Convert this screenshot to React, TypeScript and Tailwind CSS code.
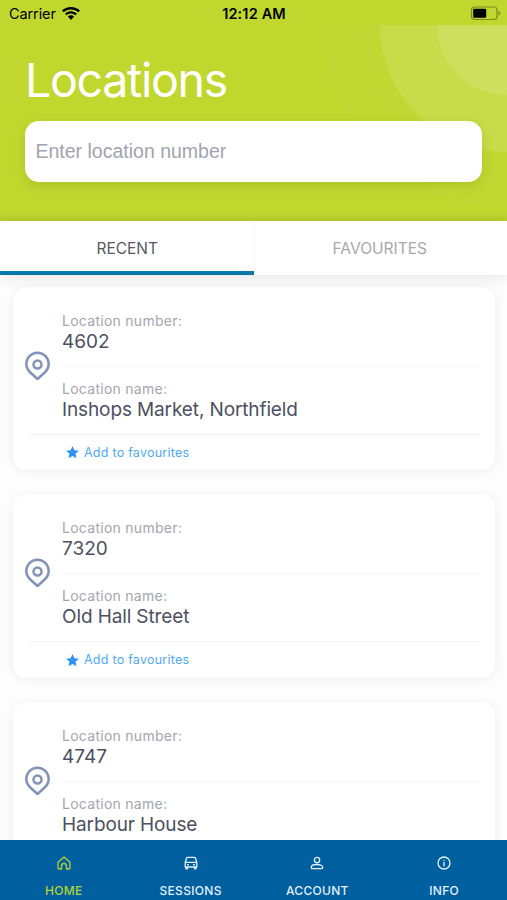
import React from "react";

type Location = {
  number: string;
  name: string;
};

type TabItem = {
  title: string;
  icon: React.ReactNode;
  active?: boolean;
};

const locations: Location[] = [
  { number: "4602", name: "Inshops Market, Northfield" },
  { number: "7320", name: "Old Hall Street" },
  { number: "4747", name: "Harbour House" },
];

const iconProps = {
  viewBox: "0 0 16 16",
  className: "size-4",
  fill: "none",
  stroke: "currentColor",
  strokeWidth: 1.3,
  strokeLinecap: "round" as const,
  strokeLinejoin: "round" as const,
};

const tabItems: TabItem[] = [
  {
    title: "HOME",
    active: true,
    icon: (
      <svg {...iconProps}>
        <path d="M2 7.2 8 2l6 5.2V13a1 1 0 0 1-1 1h-2.500V11a2.500 2.500 0 0 0-5 0v3H3a1 1 0 0 1-1-1Z" />
      </svg>
    ),
  },
  {
    title: "SESSIONS",
    icon: (
      <svg {...iconProps}>
        <path d="M2.200 7.500 3.500 3.300A1.500 1.500 0 0 1 5 2.300h6a1.500 1.500 0 0 1 1.500 1l1.300 4.200V12H2.200ZM2.200 7.300h11.600M3 12v1.800h1.500V12M11.500 12v1.800H13V12" />
        <path d="M4.700 9.700h.6M10.700 9.700h.6" strokeWidth={1.6} />
      </svg>
    ),
  },
  {
    title: "ACCOUNT",
    icon: (
      <svg {...iconProps}>
        <circle cx="8" cy="5" r="2.700" />
        <path d="M2.200 12.300C2.200 10.500 5 9.500 8 9.500s5.800 1 5.800 2.800c0 .8-.4 1.300-1.200 1.300h-9.200c-.8 0-1.200-.5-1.200-1.300Z" />
      </svg>
    ),
  },
  {
    title: "INFO",
    icon: (
      <svg {...iconProps}>
        <circle cx="8" cy="8" r="6" />
        <path d="M8 7.300v3.600M8 5.100v.1" />
      </svg>
    ),
  },
];

const StatusBar = () => (
  <div className="relative flex h-[25px] items-center justify-between pl-[9px] pr-[6px] pt-[2px] text-black">
    <div className="flex items-center gap-[6px]">
      <span className="text-[14.5px] tracking-[-0.1px]">Carrier</span>
      <svg viewBox="0 0 18 13" className="h-[13px] w-[18px]" fill="currentColor">
        <path d="M9 0c3.500 0 6.600 1.300 9 3.600l-1.600 1.700A10.600 10.600 0 0 0 9 2.400c-2.900 0-5.400 1-7.400 2.900L0 3.600A12.900 12.900 0 0 1 9 0Z" />
        <path d="M9 4.200c2.300 0 4.400.9 6 2.400l-1.700 1.700A6.200 6.200 0 0 0 9 6.600c-1.700 0-3.200.6-4.300 1.700L3 6.600a8.700 8.700 0 0 1 6-2.400Z" />
        <path d="M9 8.300c1.200 0 2.300.5 3.100 1.200L9 13 5.900 9.500A4.500 4.500 0 0 1 9 8.300Z" />
      </svg>
    </div>
    <span className="absolute inset-x-0 pl-px text-center text-[14.5px] font-semibold tracking-[0.15px]">
      12:12 AM
    </span>
    <svg viewBox="0 0 31 15" className="h-[15px] w-[31px]">
      <rect x="1.500" y="1" width="25.500" height="12.500" rx="3" fill="none" stroke="#798a20" strokeWidth="1.200" />
      <rect x="3.200" y="2.800" width="13" height="9" rx="1" fill="#000" />
      <path d="M28.500 5v4.500c1-.3 1.700-1.200 1.700-2.250S29.500 5.300 28.500 5Z" fill="#798a20" />
    </svg>
  </div>
);

const Header = () => (
  <header className="relative h-[220.5px] shrink-0 overflow-hidden bg-[#c0d82e]">
    {/* decorative rings behind the search field */}
    <svg viewBox="0 0 183 195" className="absolute right-0 top-[25px] h-[195px] w-[183px]" fill="#fff">
      <circle cx="183" cy="0" r="181" fillOpacity="0.025" />
      <circle cx="183" cy="0" r="127" fillOpacity="0.110" />
      <circle cx="183" cy="0" r="70" fillOpacity="0.110" />
    </svg>
    <StatusBar />
    <div className="relative px-[25px]">
      <h1 className="pt-[25px] text-[46.5px] leading-[60px] tracking-[-1.3px] text-white">
        Locations
      </h1>
      <input
        className="mt-[11px] block h-[61px] w-full rounded-[14px] bg-white px-[10.5px] pb-px font-['Liberation_Sans',sans-serif] text-[19.5px] shadow-[0_4px_12px_rgba(80,100,0,0.16)] outline-none placeholder:text-[#a0a4ad]"
        placeholder="Enter location number"
      />
    </div>
    <div className="absolute inset-x-0 bottom-0 h-[9px] bg-linear-to-b from-transparent to-[#7d9c10]/15" />
  </header>
);

const LocationCard: React.FC<{ location: Location }> = ({ location }) => (
  <div className="h-[183.5px] shrink-0 rounded-[14px] bg-white pl-3 pr-[15px] shadow-[0_1px_10px_rgba(0,0,0,0.07)]">
    <div className="flex h-[147px] items-center">
      <svg viewBox="0 0 26 30" className="mt-[11px] h-[30px] w-[26px] shrink-0" fill="none" stroke="#8292b8" strokeWidth="2.500" strokeLinejoin="round">
        <path d="M12.500 28 5 21.200a11.200 11.200 0 1 1 15 0Z" />
        <circle cx="12.500" cy="13.500" r="4" />
      </svg>
      <div className="ml-[11px] h-full flex-1">
        <div className="h-[80px] border-b border-[#f8f8f8] pt-[24px]">
          <p className="text-[14px] leading-[19px] tracking-[0.27px] text-[#a3a6ae]">Location number:</p>
          <p className="pt-px text-[19px] leading-[22px] text-[#4d5060]">{location.number}</p>
        </div>
        <div className="pt-[12px]">
          <p className="text-[14px] leading-[19px] tracking-[0.27px] text-[#a3a6ae]">Location name:</p>
          <p className="pt-px text-[19px] leading-[22px] tracking-[-0.12px] text-[#4d5060]">{location.name}</p>
        </div>
      </div>
    </div>
    <div className="ml-[3px] border-t border-[#f3f3f3]">
      <button className="ml-[36px] flex h-[37px] items-center gap-[5px] text-[12.5px] tracking-[0.25px] text-[#4faaf0]">
        <svg viewBox="0 0 14 14" className="mb-px ml-[2px] size-[13px]" fill="#2f91f2">
          <path d="m7 0 2 4.600 5 .5-3.800 3.200L11.400 13.300 7 10.700l-4.400 2.600 1.200-5L0 5.100l5-.5Z" />
        </svg>
        <span>Add to favourites</span>
      </button>
    </div>
  </div>
);

const App = () => {
  return (
    <div className="flex h-[900px] w-[507px] flex-col overflow-hidden bg-[#fdfdfd] font-[Inter,sans-serif]">
      <Header />
      <nav className="relative grid h-[54px] shrink-0 grid-cols-2 bg-white text-[15.5px] shadow-[0_2px_14px_rgba(0,0,0,0.1)]">
        <button className="border-b-4 border-[#0878aa] pl-px pt-[6px] text-[#555a65]">RECENT</button>
        <button className="border-l border-[#f7f7f7] pr-[2px] pt-[2px] text-[#a5a8b0]">FAVOURITES</button>
      </nav>
      <main className="flex min-h-0 flex-1 flex-col gap-6 overflow-hidden pl-[13px] pr-3 pt-[12.3px]">
        {locations.map((location) => (
          <LocationCard key={location.number} location={location} />
        ))}
      </main>
      <footer className="relative grid h-[60px] shrink-0 grid-cols-4 bg-[#00609f]">
        {tabItems.map((item) => (
          <div
            key={item.title}
            className={`flex flex-col items-center pl-px pt-[15px] text-[12px] font-medium leading-[18px] tracking-[0.3px] ${
              item.active ? "text-[#b5d334]" : "text-[#e2f1fc]"
            }`}
          >
            {item.icon}
            <span className="mt-[11px]">{item.title}</span>
          </div>
        ))}
      </footer>
    </div>
  );
};

export default App;
